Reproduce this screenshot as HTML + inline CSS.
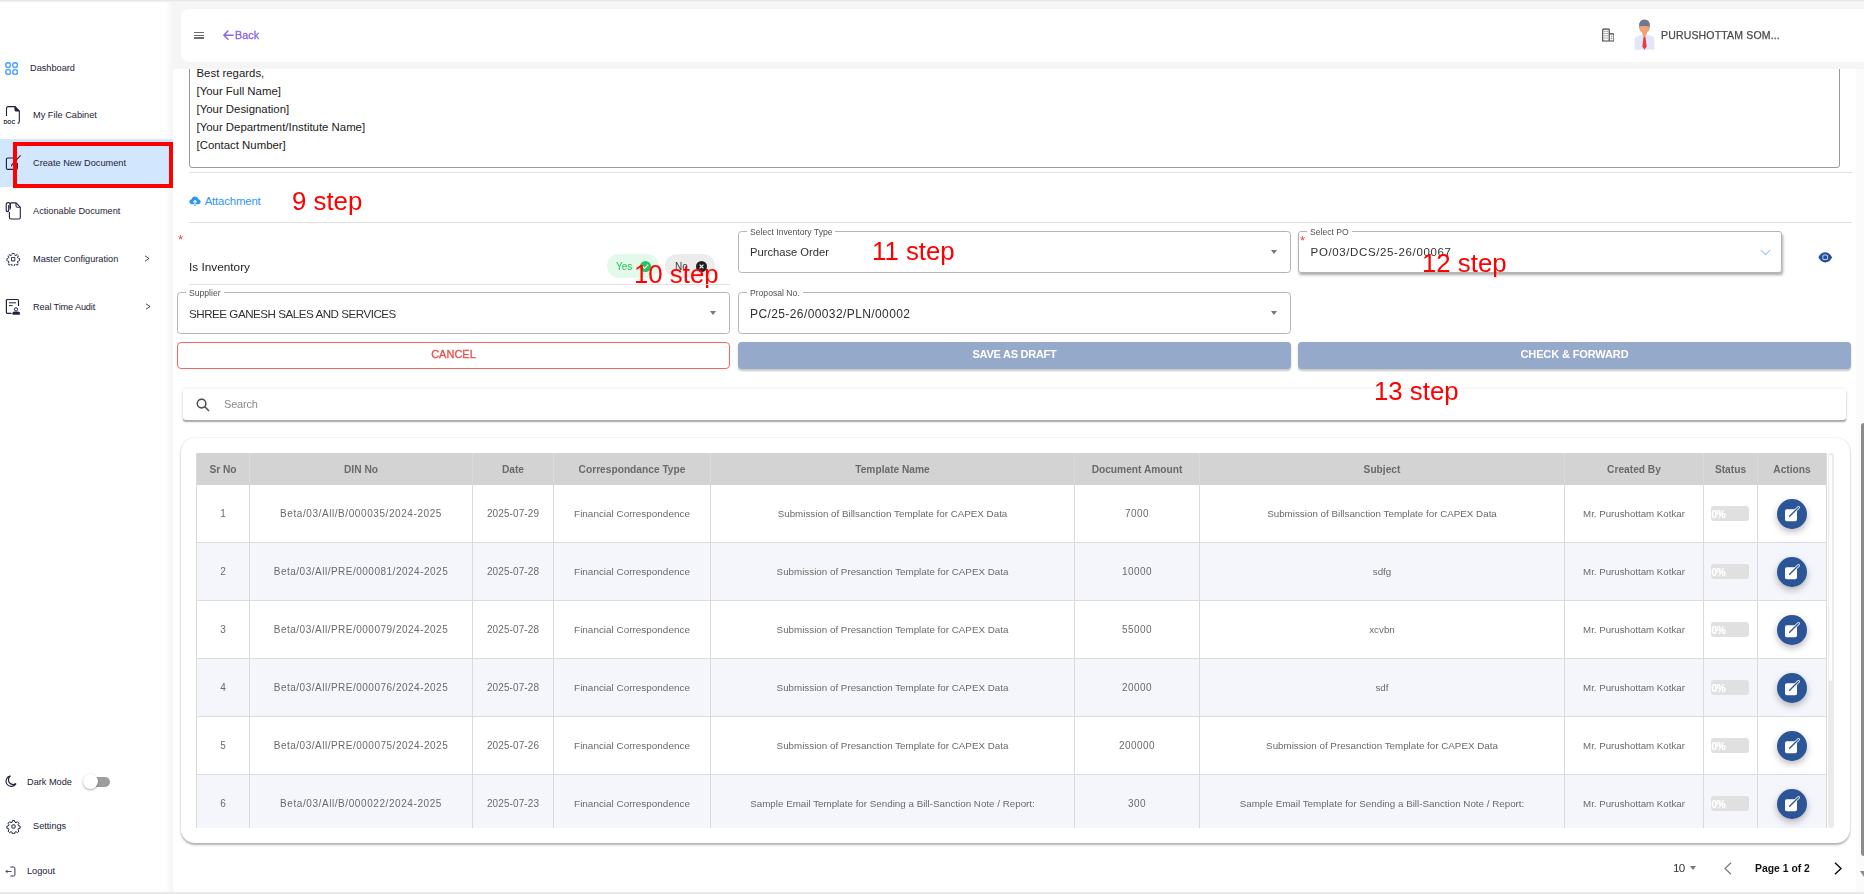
<!DOCTYPE html>
<html lang="en">
<head>
<meta charset="utf-8">
<title>Create New Document</title>
<style>
*{box-sizing:border-box;margin:0;padding:0}
html,body{width:1864px;height:894px;overflow:hidden;background:#fff;font-family:"Liberation Sans",sans-serif;color:#222}
.abs{position:absolute}
#app{position:relative;width:1864px;height:894px;overflow:hidden;background:#fff}
/* top gray band */
#topband{left:173px;top:0;width:1691px;height:69px;background:#f5f5f5}
#topline{left:0;top:0;width:1864px;height:2px;background:linear-gradient(#e4e4e4,#f3f3f3)}
#hdr{left:181px;top:9px;width:1683px;height:53px;background:#fff;border-radius:8px 0 0 8px}
/* sidebar */
#side{left:0;top:0;width:173px;height:894px;background:#fff}
#sideshadow{left:165px;top:0;width:8px;height:894px;background:linear-gradient(90deg,rgba(0,0,0,0),rgba(0,0,0,.045))}
.nav{position:absolute;left:0;width:173px;height:48px}
.nav .t{position:absolute;left:33px;top:0;height:48px;line-height:48px;font-size:9.2px;color:#1c2238;white-space:nowrap}
.nav svg{position:absolute}
.nav.sel{background:#d2e7fe}
.t2{position:absolute;font-size:9.2px;color:#1c2238;white-space:nowrap}
/* content */
.hr{position:absolute;height:1px;background:#e0e0e0}
.ann{position:absolute;color:#f00;font-size:25.8px;line-height:30px;white-space:nowrap;font-family:"Liberation Sans",sans-serif}
.fld{position:absolute;border:1px solid #b4b4b4;border-radius:3.5px;height:42px;background:#fff}
.fld .lb{position:absolute;left:8px;top:-5.3px;height:11px;line-height:11px;padding:0 3px;background:#fff;font-size:8.6px;color:#505050;white-space:nowrap}
.fld .v{position:absolute;left:11px;top:0;height:40px;line-height:40px;font-size:11.4px;color:#303030;white-space:nowrap}
.fld .tri{position:absolute;right:12.6px;top:18.2px;width:0;height:0;border-left:3.9px solid transparent;border-right:3.9px solid transparent;border-top:4.7px solid #777}
.btn{position:absolute;height:27px;line-height:25px;text-align:center;font-size:11px;font-weight:700;letter-spacing:-.26px;border-radius:4px;white-space:nowrap}

#tcard{left:181px;top:438px;width:1668.5px;height:404.5px;border-radius:14px;background:#fff;box-shadow:0 1.5px 2.2px rgba(0,0,0,.3),0 0 2.5px rgba(0,0,0,.05)}
#twrap{overflow:hidden}
#twrap>div{position:absolute}
.th-bg{background:#d3d3d3}
.tr-bg{left:0;width:100%}
.hl{left:0;width:100%;height:1px;background:#dcdcdc}
.vl{top:0;width:1px;height:100%;background:#dadada}
.th{top:0;height:31.6px;line-height:34.8px;text-align:center;font-size:10.2px;font-weight:700;color:#6a6a6a;white-space:nowrap}
.td{text-align:center;font-size:10px;color:#6a6a6a;white-space:nowrap}
.c1{letter-spacing:.5px}.c1b{letter-spacing:.58px}.c2{letter-spacing:.1px}.c5{letter-spacing:.4px}.c4,.c6{font-size:9.8px}.c7{font-size:9.7px}.c3{font-size:9.94px}
.pg{width:37.9px;height:14.6px;border-radius:3px;background:#e0e0e0;color:#fff;font-size:10px;font-weight:700;-webkit-text-stroke:.25px #fff;line-height:17px;overflow:hidden;text-align:left;padding-left:.6px;letter-spacing:-.3px}
.eb{width:30px;height:30px;border-radius:50%;background:#2b5597;box-shadow:0 3px 7px rgba(0,0,0,.28)}
.g,.fld,.btn,#twrap,.ann{will-change:transform}
</style>
</head>
<body>
<div id="app">

  <!-- ===== content ===== -->
  <div class="abs" style="left:189px;top:50px;width:1651px;height:118px;border:1px solid #9a9a9a;border-radius:3px"></div>
  <div class="abs" style="left:196.5px;top:63.8px;font-size:11.4px;line-height:18px;color:#1a1a1a;white-space:nowrap">Best regards,<br>[Your Full Name]<br>[Your Designation]<br>[Your Department/Institute Name]<br>[Contact Number]</div>
  <div class="hr" style="left:189px;top:172px;width:1663px"></div>
  <!-- attachment -->
  <svg class="abs" style="left:189px;top:195.5px" width="12" height="11" viewBox="0 0 12 11"><path d="M3.1 8.3H2.9Q0.3 8.1 0.3 5.7Q0.4 3.6 2.5 3.3Q3.3 0.4 6.1 0.4Q8.8 0.5 9.5 3.2Q11.7 3.5 11.7 5.8Q11.6 8.1 9.2 8.3H6.6V5.6L7.6 6.6L8.2 6L6 3.8L3.8 6L4.4 6.6L5.4 5.6V8.3Z" fill="#2f96f0"/><rect x="5.4" y="8.3" width="1.2" height="1.7" fill="#2f96f0"/></svg>
  <span class="abs" style="left:204.7px;top:193px;line-height:16px;font-size:11.4px;color:#2f96f0;letter-spacing:-.17px;white-space:nowrap">Attachment</span>
  <span class="ann" style="left:291.5px;top:186.1px">9 step</span>
  <div class="hr" style="left:189px;top:222px;width:1663px"></div>
  <!-- is inventory -->
  <span class="abs g" style="left:177.8px;top:233.3px;font-size:13.2px;line-height:14px;color:#ee4040">*</span>
  <span class="abs g" style="left:189px;top:259px;line-height:16px;font-size:11.8px;color:#222;white-space:nowrap">Is Inventory</span>
  <div class="abs" style="left:607px;top:254px;width:52px;height:24px;border-radius:12px;background:#e3f9ea"></div>
  <span class="abs g" style="left:616.3px;top:261.2px;line-height:12px;font-size:10px;color:#27bf5b;white-space:nowrap">Yes</span>
  <svg class="abs" style="left:640px;top:261px" width="11" height="11" viewBox="0 0 11 11"><circle cx="5.5" cy="5.5" r="5.5" fill="#22c55e"/><path d="M2.9 5.7L4.7 7.4L8.1 3.7" stroke="#fff" stroke-width="1.1" fill="none"/></svg>
  <div class="abs" style="left:665px;top:254px;width:50px;height:24px;border-radius:12px;background:#ececec"></div>
  <span class="abs g" style="left:674.8px;top:261.2px;line-height:12px;font-size:10px;color:#3a3a3a;white-space:nowrap">No</span>
  <svg class="abs" style="left:696px;top:261px" width="11" height="11" viewBox="0 0 11 11"><circle cx="5.5" cy="5.5" r="5.5" fill="#1f1f1f"/><path d="M3.6 3.6L7.4 7.4M7.4 3.6L3.6 7.4" stroke="#fff" stroke-width="1.1" fill="none"/></svg>
  <span class="ann" style="left:634px;top:259.2px">10 step</span>
  <div class="hr" style="left:189px;top:284px;width:541px"></div>

  <!-- fields -->
  <div class="fld" style="left:738px;top:231px;width:553px"><span class="lb">Select Inventory Type</span><span class="v" style="font-size:11.2px">Purchase Order</span><i class="tri"></i></div>
  <span class="ann" style="left:871.7px;top:236px">11 step</span>
  <div class="fld" style="left:1298px;top:231px;width:484px;border-radius:3px;box-shadow:1px 2.5px 3px -0.5px rgba(0,0,0,.34)"><span class="lb">Select PO</span><span class="v" style="font-size:11.5px;letter-spacing:.62px;top:-.3px;left:11.6px">PO/03/DCS/25-26/00067</span>
    <svg style="position:absolute;right:10px;top:17px" width="11" height="7" viewBox="0 0 11 7" fill="none" stroke="#9ccaf5" stroke-width="1.2"><path d="M0.8 0.8L5.5 5.6L10.2 0.8"/></svg></div>
  <span class="abs g" style="left:1299.5px;top:233.6px;font-size:13.2px;line-height:14px;color:#ee4040">*</span>
  <span class="ann" style="left:1421.5px;top:247.6px">12 step</span>
  <svg class="abs" style="left:1817.5px;top:252.3px" width="14.4" height="10.6" viewBox="0 0 14 10.5"><path d="M7 0.2Q11.4 0.4 13.8 5.25Q11.4 10.1 7 10.3Q2.6 10.1 0.2 5.25Q2.6 0.4 7 0.2Z" fill="#24509a"/><rect x="4.7" y="2.95" width="4.6" height="4.6" rx="1.2" fill="none" stroke="#c3cfe8" stroke-width="1"/></svg>
  <div class="fld" style="left:177px;top:292px;width:553px"><span class="lb">Supplier</span><span class="v" style="font-size:11.6px;letter-spacing:-.47px;top:1.1px">SHREE GANESH SALES AND SERVICES</span><i class="tri"></i></div>
  <div class="fld" style="left:738px;top:292px;width:553px"><span class="lb">Proposal No.</span><span class="v" style="font-size:12px;letter-spacing:.4px;top:.8px">PC/25-26/00032/PLN/00002</span><i class="tri"></i></div>

  <!-- buttons -->
  <div class="btn" style="left:177px;top:342px;width:553px;border:1px solid #f46666;color:#ee4b48;background:#fff;line-height:23px;font-weight:400;letter-spacing:.02px;-webkit-text-stroke:.3px #ee4b48">CANCEL</div>
  <div class="btn" style="left:738px;top:342px;width:553px;background:#95a9ca;color:#fff;box-shadow:0 1.5px 2px rgba(0,0,0,.22)">SAVE AS DRAFT</div>
  <div class="btn" style="left:1298px;top:342px;width:553px;background:#95a9ca;color:#fff;box-shadow:0 1.5px 2px rgba(0,0,0,.22);letter-spacing:-.12px">CHECK &amp; FORWARD</div>

  <!-- search -->
  <div class="abs" style="left:183px;top:389px;width:1663px;height:31px;background:#fff;border-radius:3px;box-shadow:0 2px 1.5px -0.5px rgba(0,0,0,.33),0 0 4px rgba(0,0,0,.09)"></div>
  <svg class="abs" style="left:196px;top:398px" width="14" height="14" viewBox="0 0 14 14" fill="none" stroke="#4a4a4a" stroke-width="1.5"><circle cx="5.6" cy="5.6" r="4.3"/><path d="M8.8 8.8L13 13"/></svg>
  <span class="abs g" style="left:224.3px;top:396px;line-height:16px;font-size:11px;color:#8a8a8a;letter-spacing:-.2px">Search</span>

  <div id="tcard" class="abs"></div>
  <div id="twrap" class="abs" style="left:196px;top:453px;width:1631px;height:375.2px">
  <div class="th-bg" style="left:0;top:0.1px;width:1631px;height:31.7px"></div>
  <div class="tr-bg" style="top:31.8px;height:57.2px;background:#fff"></div>
  <div class="tr-bg" style="top:90.0px;height:57.0px;background:#f5f6fb"></div>
  <div class="tr-bg" style="top:148.0px;height:57.0px;background:#fff"></div>
  <div class="tr-bg" style="top:206.0px;height:57.0px;background:#f5f6fb"></div>
  <div class="tr-bg" style="top:264.0px;height:57.0px;background:#fff"></div>
  <div class="tr-bg" style="top:322.0px;height:57.0px;background:#f5f6fb"></div>
  <div class="hl" style="top:89px"></div>
  <div class="hl" style="top:147px"></div>
  <div class="hl" style="top:205px"></div>
  <div class="hl" style="top:263px"></div>
  <div class="hl" style="top:321px"></div>
  <div class="vl" style="left:0px"></div>
  <div class="vl" style="left:53px"></div>
  <div class="vl" style="left:276px"></div>
  <div class="vl" style="left:357px"></div>
  <div class="vl" style="left:514px"></div>
  <div class="vl" style="left:878px"></div>
  <div class="vl" style="left:1003px"></div>
  <div class="vl" style="left:1368px"></div>
  <div class="vl" style="left:1507px"></div>
  <div class="vl" style="left:1561px"></div>
  <div class="vl" style="left:1630px"></div>
  <div class="th" style="left:1px;width:52px">Sr No</div>
  <div class="th" style="left:54px;width:222px">DIN No</div>
  <div class="th" style="left:277px;width:80px">Date</div>
  <div class="th" style="left:358px;width:156px">Correspondance Type</div>
  <div class="th" style="left:515px;width:363px">Template Name</div>
  <div class="th" style="left:879px;width:124px">Document Amount</div>
  <div class="th" style="left:1004px;width:364px">Subject</div>
  <div class="th" style="left:1369px;width:138px">Created By</div>
  <div class="th" style="left:1508px;width:53px">Status</div>
  <div class="th" style="left:1562px;width:68px">Actions</div>
  <div class="td c0" style="left:1px;top:31.8px;width:52px;height:57.2px;line-height:57.2px">1</div>
  <div class="td c1b" style="left:54px;top:31.8px;width:222px;height:57.2px;line-height:57.2px">Beta/03/All/B/000035/2024-2025</div>
  <div class="td c2" style="left:277px;top:31.8px;width:80px;height:57.2px;line-height:57.2px">2025-07-29</div>
  <div class="td c3" style="left:358px;top:31.8px;width:156px;height:57.2px;line-height:57.2px">Financial Correspondence</div>
  <div class="td c4" style="left:515px;top:31.8px;width:363px;height:57.2px;line-height:57.2px">Submission of Billsanction Template for CAPEX Data</div>
  <div class="td c5" style="left:879px;top:31.8px;width:124px;height:57.2px;line-height:57.2px">7000</div>
  <div class="td c6" style="left:1004px;top:31.8px;width:364px;height:57.2px;line-height:57.2px">Submission of Billsanction Template for CAPEX Data</div>
  <div class="td c7" style="left:1369px;top:31.8px;width:138px;height:57.2px;line-height:57.2px">Mr. Purushottam Kotkar</div>
  <div class="pg" style="left:1515px;top:53.2px">0%</div>
  <div class="eb" style="left:1581px;top:45.7px"><svg width="30" height="30" viewBox="0 0 30 30"><rect x="8" y="10.3" width="12" height="12" rx="1.8" fill="#fff"/><path d="M12.6 17.2L21.5 8.5" stroke="#fff" stroke-width="2.9" stroke-linecap="round"/><path d="M12.6 17.2L21.5 8.5" stroke="#2b5597" stroke-width="1.3" stroke-linecap="round"/></svg></div>
  <div class="td c0" style="left:1px;top:90.0px;width:52px;height:57.0px;line-height:57.0px">2</div>
  <div class="td c1" style="left:54px;top:90.0px;width:222px;height:57.0px;line-height:57.0px">Beta/03/All/PRE/000081/2024-2025</div>
  <div class="td c2" style="left:277px;top:90.0px;width:80px;height:57.0px;line-height:57.0px">2025-07-28</div>
  <div class="td c3" style="left:358px;top:90.0px;width:156px;height:57.0px;line-height:57.0px">Financial Correspondence</div>
  <div class="td c4" style="left:515px;top:90.0px;width:363px;height:57.0px;line-height:57.0px">Submission of Presanction Template for CAPEX Data</div>
  <div class="td c5" style="left:879px;top:90.0px;width:124px;height:57.0px;line-height:57.0px">10000</div>
  <div class="td c6" style="left:1004px;top:90.0px;width:364px;height:57.0px;line-height:57.0px">sdfg</div>
  <div class="td c7" style="left:1369px;top:90.0px;width:138px;height:57.0px;line-height:57.0px">Mr. Purushottam Kotkar</div>
  <div class="pg" style="left:1515px;top:111.3px">0%</div>
  <div class="eb" style="left:1581px;top:103.8px"><svg width="30" height="30" viewBox="0 0 30 30"><rect x="8" y="10.3" width="12" height="12" rx="1.8" fill="#fff"/><path d="M12.6 17.2L21.5 8.5" stroke="#fff" stroke-width="2.9" stroke-linecap="round"/><path d="M12.6 17.2L21.5 8.5" stroke="#2b5597" stroke-width="1.3" stroke-linecap="round"/></svg></div>
  <div class="td c0" style="left:1px;top:148.0px;width:52px;height:57.0px;line-height:57.0px">3</div>
  <div class="td c1" style="left:54px;top:148.0px;width:222px;height:57.0px;line-height:57.0px">Beta/03/All/PRE/000079/2024-2025</div>
  <div class="td c2" style="left:277px;top:148.0px;width:80px;height:57.0px;line-height:57.0px">2025-07-28</div>
  <div class="td c3" style="left:358px;top:148.0px;width:156px;height:57.0px;line-height:57.0px">Financial Correspondence</div>
  <div class="td c4" style="left:515px;top:148.0px;width:363px;height:57.0px;line-height:57.0px">Submission of Presanction Template for CAPEX Data</div>
  <div class="td c5" style="left:879px;top:148.0px;width:124px;height:57.0px;line-height:57.0px">55000</div>
  <div class="td c6" style="left:1004px;top:148.0px;width:364px;height:57.0px;line-height:57.0px">xcvbn</div>
  <div class="td c7" style="left:1369px;top:148.0px;width:138px;height:57.0px;line-height:57.0px">Mr. Purushottam Kotkar</div>
  <div class="pg" style="left:1515px;top:169.3px">0%</div>
  <div class="eb" style="left:1581px;top:161.8px"><svg width="30" height="30" viewBox="0 0 30 30"><rect x="8" y="10.3" width="12" height="12" rx="1.8" fill="#fff"/><path d="M12.6 17.2L21.5 8.5" stroke="#fff" stroke-width="2.9" stroke-linecap="round"/><path d="M12.6 17.2L21.5 8.5" stroke="#2b5597" stroke-width="1.3" stroke-linecap="round"/></svg></div>
  <div class="td c0" style="left:1px;top:206.0px;width:52px;height:57.0px;line-height:57.0px">4</div>
  <div class="td c1" style="left:54px;top:206.0px;width:222px;height:57.0px;line-height:57.0px">Beta/03/All/PRE/000076/2024-2025</div>
  <div class="td c2" style="left:277px;top:206.0px;width:80px;height:57.0px;line-height:57.0px">2025-07-28</div>
  <div class="td c3" style="left:358px;top:206.0px;width:156px;height:57.0px;line-height:57.0px">Financial Correspondence</div>
  <div class="td c4" style="left:515px;top:206.0px;width:363px;height:57.0px;line-height:57.0px">Submission of Presanction Template for CAPEX Data</div>
  <div class="td c5" style="left:879px;top:206.0px;width:124px;height:57.0px;line-height:57.0px">20000</div>
  <div class="td c6" style="left:1004px;top:206.0px;width:364px;height:57.0px;line-height:57.0px">sdf</div>
  <div class="td c7" style="left:1369px;top:206.0px;width:138px;height:57.0px;line-height:57.0px">Mr. Purushottam Kotkar</div>
  <div class="pg" style="left:1515px;top:227.3px">0%</div>
  <div class="eb" style="left:1581px;top:219.8px"><svg width="30" height="30" viewBox="0 0 30 30"><rect x="8" y="10.3" width="12" height="12" rx="1.8" fill="#fff"/><path d="M12.6 17.2L21.5 8.5" stroke="#fff" stroke-width="2.9" stroke-linecap="round"/><path d="M12.6 17.2L21.5 8.5" stroke="#2b5597" stroke-width="1.3" stroke-linecap="round"/></svg></div>
  <div class="td c0" style="left:1px;top:264.0px;width:52px;height:57.0px;line-height:57.0px">5</div>
  <div class="td c1" style="left:54px;top:264.0px;width:222px;height:57.0px;line-height:57.0px">Beta/03/All/PRE/000075/2024-2025</div>
  <div class="td c2" style="left:277px;top:264.0px;width:80px;height:57.0px;line-height:57.0px">2025-07-26</div>
  <div class="td c3" style="left:358px;top:264.0px;width:156px;height:57.0px;line-height:57.0px">Financial Correspondence</div>
  <div class="td c4" style="left:515px;top:264.0px;width:363px;height:57.0px;line-height:57.0px">Submission of Presanction Template for CAPEX Data</div>
  <div class="td c5" style="left:879px;top:264.0px;width:124px;height:57.0px;line-height:57.0px">200000</div>
  <div class="td c6" style="left:1004px;top:264.0px;width:364px;height:57.0px;line-height:57.0px">Submission of Presanction Template for CAPEX Data</div>
  <div class="td c7" style="left:1369px;top:264.0px;width:138px;height:57.0px;line-height:57.0px">Mr. Purushottam Kotkar</div>
  <div class="pg" style="left:1515px;top:285.3px">0%</div>
  <div class="eb" style="left:1581px;top:277.8px"><svg width="30" height="30" viewBox="0 0 30 30"><rect x="8" y="10.3" width="12" height="12" rx="1.8" fill="#fff"/><path d="M12.6 17.2L21.5 8.5" stroke="#fff" stroke-width="2.9" stroke-linecap="round"/><path d="M12.6 17.2L21.5 8.5" stroke="#2b5597" stroke-width="1.3" stroke-linecap="round"/></svg></div>
  <div class="td c0" style="left:1px;top:322.0px;width:52px;height:57.0px;line-height:57.0px">6</div>
  <div class="td c1b" style="left:54px;top:322.0px;width:222px;height:57.0px;line-height:57.0px">Beta/03/All/B/000022/2024-2025</div>
  <div class="td c2" style="left:277px;top:322.0px;width:80px;height:57.0px;line-height:57.0px">2025-07-23</div>
  <div class="td c3" style="left:358px;top:322.0px;width:156px;height:57.0px;line-height:57.0px">Financial Correspondence</div>
  <div class="td c4" style="left:515px;top:322.0px;width:363px;height:57.0px;line-height:57.0px">Sample Email Template for Sending a Bill-Sanction Note / Report:</div>
  <div class="td c5" style="left:879px;top:322.0px;width:124px;height:57.0px;line-height:57.0px">300</div>
  <div class="td c6" style="left:1004px;top:322.0px;width:364px;height:57.0px;line-height:57.0px">Sample Email Template for Sending a Bill-Sanction Note / Report:</div>
  <div class="td c7" style="left:1369px;top:322.0px;width:138px;height:57.0px;line-height:57.0px">Mr. Purushottam Kotkar</div>
  <div class="pg" style="left:1515px;top:343.3px">0%</div>
  <div class="eb" style="left:1581px;top:335.8px"><svg width="30" height="30" viewBox="0 0 30 30"><rect x="8" y="10.3" width="12" height="12" rx="1.8" fill="#fff"/><path d="M12.6 17.2L21.5 8.5" stroke="#fff" stroke-width="2.9" stroke-linecap="round"/><path d="M12.6 17.2L21.5 8.5" stroke="#2b5597" stroke-width="1.3" stroke-linecap="round"/></svg></div>
  </div>
  <span class="ann" style="left:1374px;top:375.8px">13 step</span>
  <!-- inner table scrollbar -->
  <div class="abs" style="left:1827.6px;top:453.2px;width:6px;height:375px;background:#ebebeb;border-radius:3px"></div>
  <div class="abs" style="left:1829px;top:455px;width:3.1px;height:226px;background:#fdfdfd;border-radius:2px"></div>
  <!-- pagination -->
  <span class="abs g" style="left:1672.6px;top:860px;line-height:16px;font-size:11.6px;color:#333;letter-spacing:-.6px">10</span>
  <div class="abs" style="left:1689.8px;top:866.2px;width:0;height:0;border-left:3.3px solid transparent;border-right:3.3px solid transparent;border-top:4.2px solid #777"></div>
  <svg class="abs" style="left:1724px;top:861.5px" width="8" height="13" viewBox="0 0 8 13" fill="none" stroke="#7a7a7a" stroke-width="1.2"><path d="M7 0.8L1 6.5L7 12.2"/></svg>
  <span class="abs g" style="left:1755.2px;top:860.5px;line-height:16px;font-size:10.4px;font-weight:700;color:#111;white-space:nowrap">Page 1 of 2</span>
  <svg class="abs" style="left:1834px;top:861.5px" width="8" height="13" viewBox="0 0 8 13" fill="none" stroke="#111" stroke-width="1.5"><path d="M1 0.8L7 6.5L1 12.2"/></svg>
  <!-- page scrollbar -->
  <div class="abs" style="left:1856px;top:69px;width:8px;height:825px;background:#fbfbfb"></div>
  <div class="abs" style="left:1861.2px;top:423px;width:4px;height:432.5px;background:#8b8b8b;border-radius:3px 0 0 3px"></div>
  <div class="abs" style="left:1860px;top:871px;width:0;height:0;border-left:4px solid transparent;border-right:4px solid transparent;border-top:6.5px solid #8b8b8b"></div>
  <div id="topband" class="abs"></div>
  <div id="hdr" class="abs"></div>
  <div id="side" class="abs"></div>
  <div id="sideshadow" class="abs"></div>

  <!-- sidebar nav -->
  <div class="nav" style="top:44px">
    <svg style="left:4.9px;top:18.1px" width="13.2" height="13.2" viewBox="0 0 14 14" fill="none" stroke="#55a8fd" stroke-width="1.7"><rect x="0.9" y="0.9" width="4.8" height="4.8" rx="1.7"/><rect x="8.3" y="0.9" width="4.8" height="4.8" rx="1.7"/><rect x="0.9" y="8.3" width="4.8" height="4.8" rx="1.7"/><rect x="8.3" y="8.3" width="4.8" height="4.8" rx="1.7"/></svg>
    <span class="t" style="left:30px">Dashboard</span>
  </div>
  <div class="nav" style="top:91px">
    <svg style="left:3px;top:14px" width="18" height="20" viewBox="0 0 18 20" fill="none" stroke="#1c2238" stroke-width="1.1"><path d="M3.5 11V3.6Q3.5 1.6 5.5 1.6H12L16.3 5.9V16.5Q16.3 18.4 14.6 18.4"/><path d="M12 1.6V4.4Q12 5.9 13.5 5.9H16.3" fill="#1c2238"/><text x="0.6" y="18.6" font-family="Liberation Sans, sans-serif" font-size="5.2" font-weight="700" fill="#1c2238" stroke="none">DOC</text></svg>
    <span class="t">My File Cabinet</span>
  </div>
  <div class="nav sel" style="top:139px">
    <svg style="left:5px;top:15px" width="18" height="18" viewBox="0 0 18 18" fill="none" stroke="#1c2238" stroke-width="1.1"><path d="M9 4H2.8Q1.4 4 1.4 5.4V14Q1.4 15.4 2.8 15.4H11Q12.4 15.4 12.4 14V9"/><path d="M15.6 1.4L7 10.6L6.4 12.2"/></svg>
    <span class="t">Create New Document</span>
  </div>
  <div class="abs" style="left:13px;top:141.5px;width:160px;height:46.5px;border:4px solid #f00"></div>
  <div class="nav" style="top:187px">
    <svg style="left:5px;top:14px" width="17" height="20" viewBox="0 0 17 20" fill="none" stroke="#1c2238" stroke-width="1.1"><path d="M5.2 7V3.2Q5.2 1.9 6.5 1.9H11L15.3 6.2V16.4Q15.3 18 13.7 18H6Q4.4 18 4.4 16.4V11"/><path d="M11 1.9V4.8Q11 6.2 12.4 6.2H15.3"/><path d="M3.7 4.2V9.3Q3.7 10.6 2.5 10.6Q1.2 10.6 1.2 9.3V3.6Q1.2 1.6 3.1 1.6Q5.2 1.6 5.2 3.6V8.4"/></svg>
    <span class="t">Actionable Document</span>
  </div>
  <div class="nav" style="top:235px">
    <svg style="left:5.8px;top:16.7px" width="14.4" height="14.4" viewBox="0 0 24 24" fill="none" stroke="#363d58" stroke-width="1.7" stroke-linejoin="round"><path d="M10.3 2.5h3.4l.5 2.6 1.9.8 2.2-1.5 2.4 2.4-1.5 2.2.8 1.9 2.6.5v3.4l-2.6.5-.8 1.9 1.5 2.2-2.4 2.4-2.2-1.5-1.9.8-.5 2.6h-3.4l-.5-2.6-1.9-.8-2.2 1.5-2.4-2.4 1.5-2.2-.8-1.9-2.6-.5v-3.4l2.6-.5.8-1.9-1.5-2.2 2.4-2.4 2.2 1.5 1.9-.8z" stroke-dasharray="5.2 1.3"/><rect x="9.2" y="9.2" width="5.6" height="5.6" rx="1"/></svg>
    <span class="t">Master Configuration</span>
    <svg style="left:143.7px;top:19.8px" width="6" height="7" viewBox="0 0 6 7" fill="none" stroke="#333" stroke-width="0.9"><path d="M1 0.8L5 3.5L1 6.2"/></svg>
  </div>
  <div class="nav" style="top:283px">
    <svg style="left:5px;top:15px" width="16" height="18" viewBox="0 0 16 18" fill="none" stroke="#1c2238" stroke-width="1.2"><path d="M6.5 15.4H2.5Q1.4 15.4 1.4 14.3V2.6Q1.4 1.5 2.5 1.5H12.4Q13.5 1.5 13.5 2.6V8"/><path d="M4 4.8H11M4 7.6H7.5" stroke-width="1"/><circle cx="11" cy="11.4" r="1.6" stroke-width="1"/><path d="M7.8 16.3H14.6V15.2Q14.6 14 13.4 14H9Q7.8 14 7.8 15.2Z" fill="#1c2238" stroke-width="0.8"/></svg>
    <span class="t" style="letter-spacing:-.15px">Real Time Audit</span>
    <svg style="left:145.2px;top:19.8px" width="6" height="7" viewBox="0 0 6 7" fill="none" stroke="#333" stroke-width="0.9"><path d="M1 0.8L5 3.5L1 6.2"/></svg>
  </div>

  <!-- sidebar bottom -->
  <svg class="abs" style="left:4px;top:775px" width="13" height="13" viewBox="0 0 13 13" fill="none" stroke="#1c2238" stroke-width="1.2" stroke-linecap="round"><path d="M6.4 0.9A5.3 5.3 0 1 0 12 8.6A4.6 4.6 0 0 1 6.4 0.9Z"/></svg>
  <span class="t2" style="left:27px;top:776.7px;line-height:11px">Dark Mode</span>
  <div class="abs" style="left:90px;top:776.5px;width:20px;height:10px;border-radius:5px;background:#9e9e9e"></div>
  <div class="abs" style="left:82.5px;top:774px;width:15px;height:15px;border-radius:50%;background:#fff;box-shadow:0 1px 2.5px rgba(0,0,0,.35)"></div>
  <svg class="abs" style="left:5.5px;top:819px" width="15" height="15" viewBox="0 0 24 24" fill="none" stroke="#1c2238" stroke-width="1.6" stroke-linejoin="round"><path d="M10.3 2.5h3.4l.5 2.6 1.9.8 2.2-1.5 2.4 2.4-1.5 2.2.8 1.9 2.6.5v3.4l-2.6.5-.8 1.9 1.5 2.2-2.4 2.4-2.2-1.5-1.9.8-.5 2.6h-3.4l-.5-2.6-1.9-.8-2.2 1.5-2.4-2.4 1.5-2.2-.8-1.9-2.6-.5v-3.4l2.6-.5.8-1.9-1.5-2.2 2.4-2.4 2.2 1.5 1.9-.8z"/><rect x="9.4" y="9.4" width="5.2" height="5.2" rx="1"/></svg>
  <span class="t2" style="left:33px;top:821px;line-height:11px">Settings</span>
  <svg class="abs" style="left:5px;top:866px" width="11" height="11" viewBox="0 0 11 11" fill="none" stroke="#1c2238" stroke-width="0.9"><path d="M5.4 1H8.6Q9.9 1 9.9 2.3V8.7Q9.9 10 8.6 10H5.4"/><path d="M6.6 5.5H1M2.6 3.9L1 5.5L2.6 7.1" stroke-width="0.8"/></svg>
  <span class="t2" style="left:27px;top:866px;line-height:11px">Logout</span>

  <!-- header content -->
  <div class="abs" style="left:194px;top:31.9px;width:10px;height:1.4px;background:#6c6c6c"></div>
  <div class="abs" style="left:194px;top:34.7px;width:10px;height:1.4px;background:#6c6c6c"></div>
  <div class="abs" style="left:194px;top:37.4px;width:10px;height:1.4px;background:#6c6c6c"></div>
  <svg class="abs" style="left:222.5px;top:30px" width="11" height="10.4" viewBox="0 0 11 10.4" fill="none" stroke="#8a66e6" stroke-width="1.4"><path d="M5.4 0.6L0.9 5.2L5.4 9.8M0.9 5.2H10.6"/></svg>
  <span class="abs g" style="left:235.4px;top:28px;line-height:14px;font-size:10.7px;color:#8a66e6;letter-spacing:.15px;-webkit-text-stroke:.35px #8a66e6">Back</span>
  <!-- building icon -->
  <svg class="abs" style="left:1601.6px;top:27.9px" width="12.8" height="14.2" viewBox="0 0 14 14.5" fill="none" stroke="#444" stroke-width="1.25"><path d="M0.8 13.6V1.7Q0.8 0.7 1.8 0.7H6.9Q7.9 0.7 7.9 1.7V13.6M7.9 5.9H12.1Q13.1 5.9 13.1 6.9V13.6M0 13.7H14"/><path d="M2.6 3.2H3.8M2.6 5.6H3.8M2.6 8H3.8M2.6 10.4H3.8M5 3.2H6.2M5 5.6H6.2M5 8H6.2M5 10.4H6.2M10 8.5H11.2M10 10.9H11.2" stroke-width="0.9"/></svg>
  <!-- avatar -->
  <svg class="abs" style="left:1634.1px;top:19.2px" width="21" height="31" viewBox="0 0 21 31"><path d="M0.6 30.7V21Q0.6 17.7 4 16.9L8.4 15.5L10.5 17.8L12.6 15.5L17 16.9Q20.4 17.7 20.4 21V30.7Z" fill="#e1e7f7"/><path d="M5.1 4H15.9V9.2Q15.5 11.6 13 13.6L12.3 16.2L10.5 18.3L8.7 16.2L8 13.6Q5.5 11.6 5.1 9.2Z" fill="#f0a278"/><path d="M5.2 8.6Q4.4 0.4 10.5 0.4Q16.6 0.4 15.8 8.6L14.9 7.2Q10.5 6.6 6.1 7.2Z" fill="#6e7890"/><path d="M9.5 17.7H11.5L12.7 27.6L10.5 30.7L8.3 27.6Z" fill="#ec393e"/></svg>
  <span class="abs g" style="left:1660.5px;top:27.5px;line-height:14px;font-size:10.5px;color:#4a4a4a;letter-spacing:.17px;-webkit-text-stroke:.25px #4a4a4a;white-space:nowrap">PURUSHOTTAM SOM...</span>
  <div id="topline" class="abs"></div>
  <div class="abs" style="left:0;top:891.8px;width:1864px;height:2.2px;background:#e9e9e9"></div>

</div>
</body>
</html>
